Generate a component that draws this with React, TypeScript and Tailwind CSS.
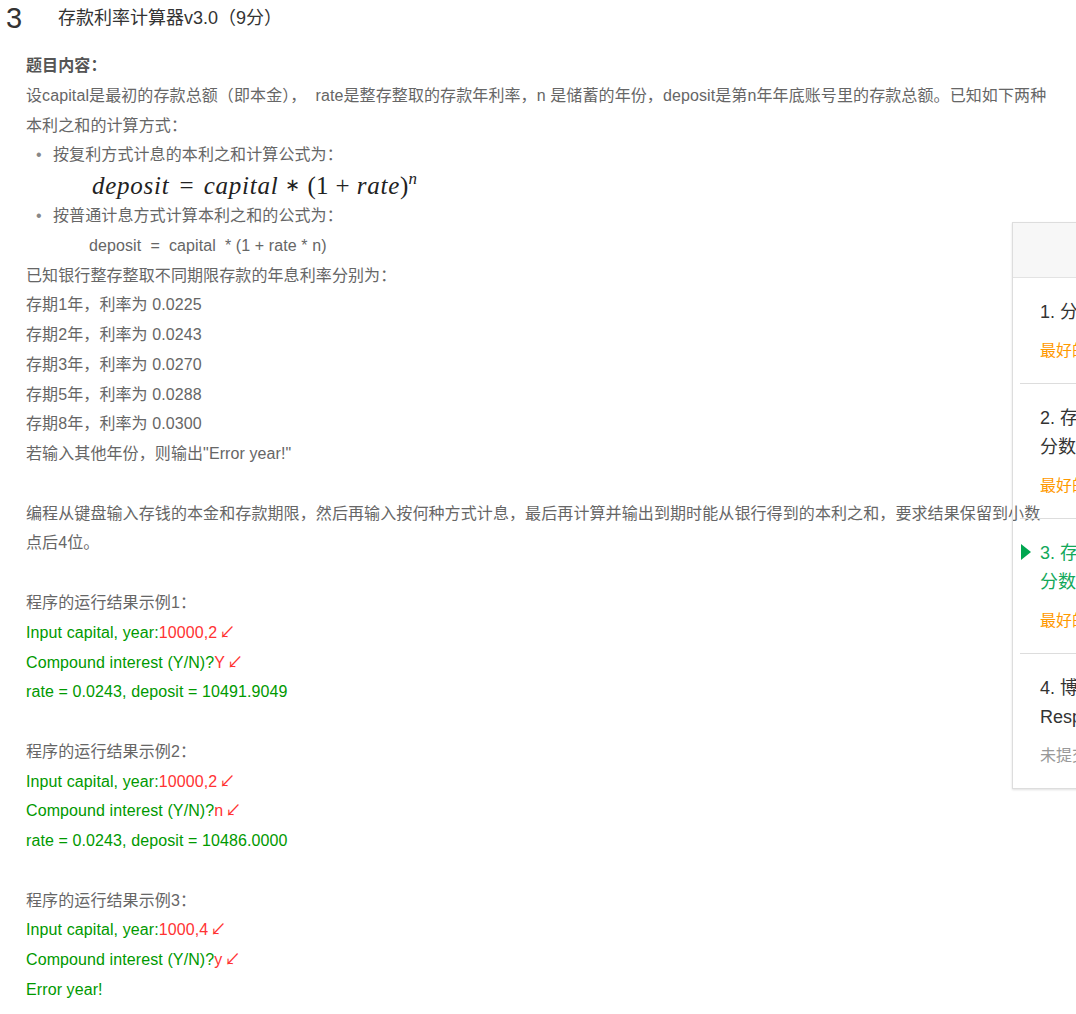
import React from "react";

const font = { fontFamily: '"Liberation Sans", Arial, "Noto Sans CJK SC", sans-serif' };

function Enter() {
  return <span className="ml-[2px] text-[16px] text-[#f33]">↙</span>;
}

function Line({ children, className = "" }: { children?: React.ReactNode; className?: string }) {
  return <div className={`h-[29.77px] whitespace-nowrap leading-[29.77px] ${className}`}>{children}</div>;
}

function Bullet({ children }: { children: React.ReactNode }) {
  return (
    <Line className="flex">
      <span className="w-[27px] pl-[10px] text-[#888]">•</span>
      <span>{children}</span>
    </Line>
  );
}

function Formula() {
  return (
    <div
      className="flex h-[31px] items-center whitespace-nowrap pl-[66px] text-[25px] italic text-[#222]"
      style={{ fontFamily: '"Liberation Serif", "Times New Roman", serif' }}
    >
      <span className="tracking-[0.03em]">deposit</span>
      <span className="mx-[10px] not-italic">=</span>
      <span className="tracking-[0.03em]">capital</span>
      <span className="mx-[7px] text-[18px] not-italic">∗</span>
      <span className="not-italic">(1</span>
      <span className="mx-[7px] not-italic">+</span>
      <span className="tracking-[0.03em]">rate</span>
      <span className="not-italic">)</span>
      <span className="-mt-[14px] text-[17px]">n</span>
    </div>
  );
}

function Sample({ n, capital, yn, result }: { n: number; capital: string; yn: string; result: string }) {
  return (
    <>
      <Line>程序的运行结果示例{n}：</Line>
      <Line className="text-[#090]">
        Input capital, year:<span className="text-[#f33]">{capital}</span>
        <Enter />
      </Line>
      <Line className="text-[#090]">
        Compound interest (Y/N)?<span className="text-[#f33]">{yn}</span>
        <Enter />
      </Line>
      <Line className="text-[#090]">{result}</Line>
    </>
  );
}

type Item = { no: string; lines: string[]; note: string; active?: boolean; done?: boolean };

const items: Item[] = [
  { no: "1.", lines: ["分数转换为小数"], note: "最好的成绩：10分", done: true },
  { no: "2.", lines: ["存款利率计算器v2.0（7", "分数）"], note: "最好的成绩：7分", done: true },
  { no: "3.", lines: ["存款利率计算器v3.0（9", "分数）"], note: "最好的成绩：9分", active: true, done: true },
  { no: "4.", lines: ["博弈游戏：Rock-Paper", "Response"], note: "未提交" },
];

function SidePanel() {
  return (
    <div className="absolute left-[1012px] top-[222px] w-[300px] border border-[#ddd] shadow-[0_1px_2px_rgba(0,0,0,0.12)]">
      <div className="h-[55px] border-b border-[#e3e3e3] bg-[#f7f7f7]" />
      <div className="pl-[7px]">
        {items.map((it, i) => (
          <div
            key={it.no}
            className={`relative pb-[20px] pl-[20px] pt-[20px] ${i < items.length - 1 ? "border-b border-[#ddd]" : ""}`}
          >
            {it.active && (
              <span className="absolute left-[1px] top-[25px] h-0 w-0 border-y-[8px] border-l-[10px] border-y-transparent border-l-[#00a650]" />
            )}
            <div className={`text-[18px] leading-[29px] ${it.active ? "text-[#13a85a]" : "text-[#333]"}`}>
              {it.lines.map((l, j) => (
                <div key={j} className="whitespace-nowrap">
                  {j === 0 ? `${it.no} ${l}` : l}
                </div>
              ))}
            </div>
            <div className={`mt-[12px] text-[16px] leading-[24px] ${it.done ? "text-[#f90]" : "text-[#999]"}`}>
              {it.note}
            </div>
          </div>
        ))}
      </div>
    </div>
  );
}

export default function App() {
  return (
    <div className="relative h-[1014px] w-[1076px] overflow-hidden bg-white" style={font}>
      <div className="flex h-[36px] items-center text-[#333]">
        <span className="w-[58px] pl-[6px] text-[29px] leading-none">3</span>
        <span className="text-[18px]">存款利率计算器v3.0（9分）</span>
      </div>

      <div className="pl-[26px] pt-[15px] text-[16px] tracking-[0.1px] text-[#666]">
        <Line className="font-bold text-[#555]">题目内容：</Line>
        <Line>
          设capital是最初的存款总额（即本金）， &nbsp;rate是整存整取的存款年利率，n 是储蓄的年份，deposit是第n年年底账号里的存款总额。已知如下两种
        </Line>
        <Line>本利之和的计算方式：</Line>
        <Bullet>按复利方式计息的本利之和计算公式为：</Bullet>
        <Formula />
        <Bullet>按普通计息方式计算本利之和的公式为：</Bullet>
        <Line className="pl-[63px]">deposit&nbsp; =&nbsp; capital&nbsp; * (1 + rate * n)</Line>
        <Line>已知银行整存整取不同期限存款的年息利率分别为：</Line>
        <Line>存期1年，利率为 0.0225</Line>
        <Line>存期2年，利率为 0.0243</Line>
        <Line>存期3年，利率为 0.0270</Line>
        <Line>存期5年，利率为 0.0288</Line>
        <Line>存期8年，利率为 0.0300</Line>
        <Line>若输入其他年份，则输出"Error year!"</Line>
        <Line />
        <Line>
          编程从键盘输入存钱的本金和存款期限，然后再输入按何种方式计息，最后再计算并输出到期时能从银行得到的本利之和，要求结果保留到小数
        </Line>
        <Line>点后4位。</Line>
        <Line />
        <Sample n={1} capital="10000,2" yn="Y" result="rate = 0.0243, deposit = 10491.9049" />
        <Line />
        <Sample n={2} capital="10000,2" yn="n" result="rate = 0.0243, deposit = 10486.0000" />
        <Line />
        <Sample n={3} capital="1000,4" yn="y" result="Error year!" />
      </div>

      <SidePanel />
    </div>
  );
}
